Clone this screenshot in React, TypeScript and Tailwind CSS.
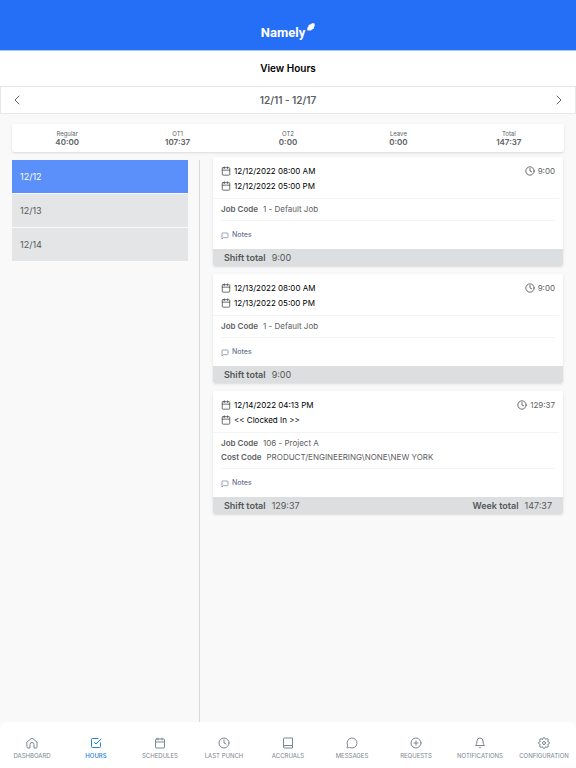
import type { ReactNode } from 'react';
import { ChevronLeft, ChevronRight, MessageCircle } from 'lucide-react';
import { FiBell, FiCalendar, FiCheckSquare, FiClock, FiMessageSquare, FiPlusCircle } from 'react-icons/fi';

const totals = [
  { label: 'Regular', value: '40:00' },
  { label: 'OT1', value: '107:37' },
  { label: 'OT2', value: '0:00' },
  { label: 'Leave', value: '0:00' },
  { label: 'Total', value: '147:37' },
];

const days = ['12/12', '12/13', '12/14'];

type Shift = {
  start: string;
  end: string;
  hours: string;
  codes: [string, string][];
  weekTotal?: string;
};

const shifts: Shift[] = [
  { start: '12/12/2022 08:00 AM', end: '12/12/2022 05:00 PM', hours: '9:00', codes: [['Job Code', '1 - Default Job']] },
  { start: '12/13/2022 08:00 AM', end: '12/13/2022 05:00 PM', hours: '9:00', codes: [['Job Code', '1 - Default Job']] },
  {
    start: '12/14/2022 04:13 PM',
    end: '<< Clocked In >>',
    hours: '129:37',
    codes: [['Job Code', '106 - Project A'], ['Cost Code', 'PRODUCT/ENGINEERING\\NONE\\NEW YORK']],
    weekTotal: '147:37',
  },
];

function Glyph({ children }: { children: ReactNode }) {
  return (
    <svg className="size-3" viewBox="0 0 24 24" fill="none" stroke="currentColor" strokeWidth="2" strokeLinecap="round" strokeLinejoin="round" aria-hidden="true">
      {children}
    </svg>
  );
}

const tabs = [
  {
    label: 'DASHBOARD',
    icon: (
      <Glyph>
        <path d="M2 10 12 2l10 8v10a2 2 0 0 1-2 2h-4v-7a4 4 0 0 0-8 0v7H4a2 2 0 0 1-2-2z" />
      </Glyph>
    ),
  },
  { label: 'HOURS', icon: <FiCheckSquare className="size-3" />, active: true },
  { label: 'SCHEDULES', icon: <FiCalendar className="size-3" /> },
  { label: 'LAST PUNCH', icon: <FiClock className="size-3" /> },
  {
    label: 'ACCRUALS',
    icon: (
      <Glyph>
        <path d="M3 20V4a2 2 0 0 1 2-2h16v20H5a2 2 0 0 1-2-2 3 3 0 0 1 3-3h15" />
      </Glyph>
    ),
  },
  { label: 'MESSAGES', icon: <MessageCircle className="size-3" /> },
  { label: 'REQUESTS', icon: <FiPlusCircle className="size-3" /> },
  { label: 'NOTIFICATIONS', icon: <FiBell className="size-3" /> },
  {
    label: 'CONFIGURATION',
    icon: (
      <Glyph>
        <path d="M9 4.500Q10 1 12 1t3 3.500Q18.500 2.500 20 4t-.5 5Q23 10 23 12t-3.500 3q2 3.500.5 5t-5-.5Q14 23 12 23t-3-3.500Q5.500 21.500 4 20t.5-5Q1 14 1 12t3.500-3Q2.500 5.500 4 4t5 .5z" />
        <circle cx="12" cy="12" r="3" />
      </Glyph>
    ),
  },
];

function Logo() {
  return (
    <div className="flex items-start gap-0.5 text-white">
      <span className="font-['Roboto'] text-[13px] leading-5 font-bold">Namely</span>
      <svg className="size-2" viewBox="0 0 20 20" fill="currentColor" aria-hidden="true">
        <path d="M18 0c-2 2-4 0-6 1.500-1.500 1-2 1.500-4 2C4 4 3 6 3.500 9c.2 2-2.500 2-3 5-.3 2 1 3 .5 5 2 .7 3-1 5-.5 3 .8 5 0 6.500-2 1-1.500 3.500-1 4.500-3 .8-2 .2-3 1.500-5C20 6 19.500 3 18 0z" />
      </svg>
    </div>
  );
}

function ShiftCard({ shift }: { shift: Shift }) {
  return (
    <article className="overflow-hidden rounded-xs bg-white text-[8px] shadow-sm">
      <div className="mr-1 flex justify-between border-b border-gray-100 pt-1.5 pr-1 pb-[5px] pl-2">
        <div className="text-black">
          {[shift.start, shift.end].map((time) => (
            <div key={time} className="flex h-[15px] items-center gap-[3px]">
              <FiCalendar className="size-2.5 text-[#4d5154]" />
              {time}
            </div>
          ))}
        </div>
        <div className="flex h-[15px] items-center gap-[3px] text-[#5c6063]">
          <FiClock className="size-2.5 text-[#4d5154]" />
          {shift.hours}
        </div>
      </div>
      <div className="mx-2 border-b border-gray-100 pt-[3px] pb-1 leading-[14px] text-[#5c6063]">
        {shift.codes.map(([name, value]) => (
          <p key={name} className="flex gap-[5px]">
            <span className="font-semibold">{name}</span>
            <span>{value}</span>
          </p>
        ))}
      </div>
      <button className="mx-2 flex h-7 items-center gap-[3px] pt-px text-[7px] font-medium text-[#6b7694]">
        <FiMessageSquare className="size-2" />
        Notes
      </button>
      <footer className="flex h-[17px] items-center justify-between bg-[#dcdedf] px-[11px] text-[9px] leading-3 text-[#54585b]">
        <p className="flex gap-1.5">
          <span className="font-semibold">Shift total</span>
          <span>{shift.hours}</span>
        </p>
        {shift.weekTotal && (
          <p className="flex gap-1.5">
            <span className="font-semibold">Week total</span>
            <span>{shift.weekTotal}</span>
          </p>
        )}
      </footer>
    </article>
  );
}

export default function App() {
  return (
    <div className="flex min-h-screen flex-col bg-[#f9f9f9] font-['Inter',sans-serif]">
      {/* Brand bar */}
      <header className="flex h-[51px] items-end justify-center border-b border-[#a9c8fa] bg-[#256ef6] pb-[7px]">
        <Logo />
      </header>

      <h1 className="bg-white py-[10px] text-center text-[10px] leading-[15px] font-semibold text-black">View Hours</h1>

      {/* Week picker */}
      <div className="flex h-7 items-center justify-between border border-gray-200 bg-white px-2 text-[#5c6063]">
        <button aria-label="Previous week">
          <ChevronLeft className="size-4" strokeWidth={1.5} />
        </button>
        <span className="text-[10px] font-semibold">12/11 - 12/17</span>
        <button aria-label="Next week">
          <ChevronRight className="size-4" strokeWidth={1.5} />
        </button>
      </div>

      <section className="mx-3 mt-2.5 grid h-7 grid-cols-5 items-center rounded-xs bg-white text-center text-[#5c6063] shadow-sm">
        {totals.map((t) => (
          <div key={t.label}>
            <p className="text-[6px] leading-2">{t.label}</p>
            <p className="text-[8px] leading-2 font-semibold">{t.value}</p>
          </div>
        ))}
      </section>

      <main className="grid flex-1 grid-cols-[200fr_376fr]">
        <aside className="mt-2 border-r border-[#d9dadb] pr-[11px] pl-3">
          {days.map((day, i) => (
            <button
              key={day}
              className={
                i === 0
                  ? 'mb-px flex h-[33px] w-full items-center bg-[#5b8ff9] px-2 text-[9px] text-white'
                  : 'mb-px flex h-[33px] w-full items-center bg-[#e3e5e6] px-2 text-[9px] text-[#54585b]'
              }
            >
              {day}
            </button>
          ))}
        </aside>
        <section className="flex flex-col gap-2 px-[13px] pt-[5px]">
          {shifts.map((shift) => (
            <ShiftCard key={shift.start} shift={shift} />
          ))}
        </section>
      </main>

      <nav className="grid h-[46px] grid-cols-9 rounded-t-lg bg-white">
        {tabs.map((tab) => (
          <a
            key={tab.label}
            href="#"
            className={`flex flex-col items-center gap-[3px] pt-[15px] text-[6px] leading-[7px] ${tab.active ? 'font-medium text-[#1d7fd6]' : 'text-[#7d8592]'}`}
          >
            {tab.icon}
            <span className="whitespace-nowrap">{tab.label}</span>
          </a>
        ))}
      </nav>
    </div>
  );
}
